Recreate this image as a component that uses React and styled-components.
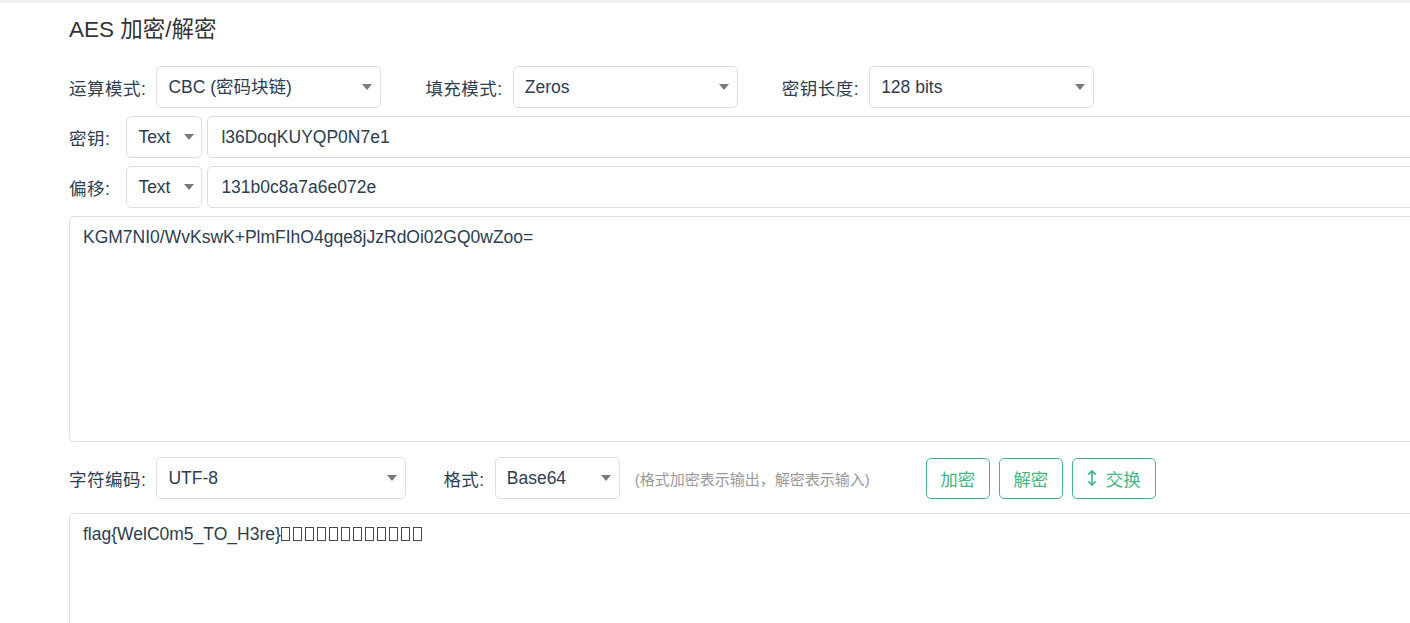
import React, { useState } from "react";
import styled, { createGlobalStyle } from "styled-components";

const Green = "#42b983";
const Ink = "#2c3e50";
const Line = "#dcdfe6";

const GlobalStyle = createGlobalStyle`
  html, body {
    margin: 0;
    padding: 0;
    overflow: hidden;
    background: #fff;
  }
  body {
    font-family: "Liberation Sans", Arial, "Noto Sans CJK SC", sans-serif;
    color: ${Ink};
  }
`;

const TopStrip = styled.div`
  height: 3px;
  background: #eeeeee;
`;

const Page = styled.main`
  width: 1400px;
  padding-left: 69px;
`;

const Title = styled.h2`
  margin: 14px 0 0;
  height: 25px;
  line-height: 25px;
  font-size: 22.5px;
  font-weight: 400;
  color: #333;
`;

const Form = styled.form`
  margin-top: 24px;
`;

const Row = styled.div`
  display: flex;
  align-items: center;
  height: 42px;
  margin-top: ${p => p.$top || 0}px;
`;

const Label = styled.label`
  font-size: 17.5px;
  letter-spacing: 0.5px;
  color: ${Ink};
  white-space: nowrap;
  margin-left: ${p => p.$left || 0}px;
  margin-right: ${p => p.$gap || 10}px;
`;

const SelectWrap = styled.div`
  position: relative;
  flex: 0 0 ${p => p.$width}px;
  height: 42px;
  &::after {
    content: "";
    position: absolute;
    right: ${p => p.$arrow || 9}px;
    top: 18px;
    border-left: 5px solid transparent;
    border-right: 5px solid transparent;
    border-top: 6px solid #7a7a7a;
    pointer-events: none;
  }
`;

const Select = styled.select`
  appearance: none;
  width: 100%;
  height: 100%;
  box-sizing: border-box;
  padding: 0 24px 0 11px;
  font-family: inherit;
  font-size: 17.5px;
  color: ${Ink};
  background: #fff;
  border: 1px solid ${Line};
  border-radius: 5px;
  outline: none;
`;

const TextInput = styled.input`
  flex: 1 1 auto;
  margin-left: 5px;
  height: 42px;
  box-sizing: border-box;
  padding: 0 13px;
  font-family: inherit;
  font-size: 17.5px;
  color: ${Ink};
  border: 1px solid ${Line};
  border-radius: 5px;
  outline: none;
`;

const TextArea = styled.textarea`
  display: block;
  width: 100%;
  height: ${p => p.$height}px;
  margin-top: ${p => p.$top || 0}px;
  box-sizing: border-box;
  padding: 7px 13px;
  font-family: inherit;
  font-size: 17.5px;
  line-height: 1.5;
  color: ${Ink};
  border: 1px solid ${Line};
  border-radius: 5px;
  resize: none;
  outline: none;
`;

const Output = styled.div`
  height: 200px;
  margin-top: 14px;
  box-sizing: border-box;
  padding: 7px 13px;
  font-size: 17.5px;
  line-height: 1.5;
  color: ${Ink};
  border: 1px solid ${Line};
  border-radius: 5px;
`;

const Tofu = styled.span`
  display: inline-block;
  width: 9px;
  height: 14px;
  margin-right: 3px;
  box-sizing: border-box;
  border: 1px solid #4a4a4a;
  vertical-align: -1px;
`;

const Hint = styled.span`
  margin-left: 15px;
  font-size: 15px;
  color: #999;
  white-space: nowrap;
`;

const Actions = styled.div`
  display: flex;
  gap: 9px;
  margin-left: 56px;
`;

const Button = styled.button`
  display: flex;
  align-items: center;
  gap: ${p => (p.$icon ? 9 : 0)}px;
  height: 41px;
  padding: 0 ${p => (p.$icon ? 14 : 13.5)}px;
  font-family: inherit;
  font-size: 17.5px;
  color: ${Green};
  background: #fff;
  border: 1px solid ${Green};
  border-radius: 5px;
  cursor: pointer;
`;

const SwapIcon = () => (
  <svg width="10" height="18" viewBox="0 0 10 18" fill="none" stroke={Green} strokeWidth="1.7" strokeLinecap="round" strokeLinejoin="round">
    <path d="M5 2v14" />
    <path d="M1.8 5.2L5 2l3.2 3.2" />
    <path d="M1.8 12.8L5 16l3.2-3.2" />
  </svg>
);

const Dropdown = ({ width, value, options, arrow }) => (
  <SelectWrap $width={width} $arrow={arrow}>
    <Select defaultValue={value}>
      {options.map(o => (
        <option key={o}>{o}</option>
      ))}
    </Select>
  </SelectWrap>
);

const App = () => {
  const [input, setInput] = useState("KGM7NI0/WvKswK+PlmFIhO4gqe8jJzRdOi02GQ0wZoo=");
  const [key, setKey] = useState("l36DoqKUYQP0N7e1");
  const [iv, setIv] = useState("131b0c8a7a6e072e");

  return (
    <>
      <GlobalStyle />
      <TopStrip />
      <Page>
        <Title>AES 加密/解密</Title>
        <Form onSubmit={e => e.preventDefault()}>
          <Row>
            <Label>运算模式:</Label>
            <Dropdown width={225} value="CBC (密码块链)" options={["ECB (电子密码本)", "CBC (密码块链)", "CFB (密文反馈)", "OFB (输出反馈)", "CTR (计数器)"]} />
            <Label $left={44}>填充模式:</Label>
            <Dropdown width={225} value="Zeros" options={["Pkcs7", "Iso97971", "AnsiX923", "Iso10126", "Zeros", "NoPadding"]} />
            <Label $left={44}>密钥长度:</Label>
            <Dropdown width={225} value="128 bits" options={["128 bits", "192 bits", "256 bits"]} />
          </Row>
          <Row $top={8}>
            <Label $gap={16}>密钥:</Label>
            <Dropdown width={76} value="Text" options={["Text", "Hex", "Base64"]} arrow={8} />
            <TextInput value={key} onChange={e => setKey(e.target.value)} />
          </Row>
          <Row $top={8}>
            <Label $gap={16}>偏移:</Label>
            <Dropdown width={76} value="Text" options={["Text", "Hex", "Base64"]} arrow={8} />
            <TextInput value={iv} onChange={e => setIv(e.target.value)} />
          </Row>
          <TextArea $top={8} $height={226} value={input} onChange={e => setInput(e.target.value)} />
          <Row $top={15}>
            <Label>字符编码:</Label>
            <Dropdown width={250} value="UTF-8" options={["UTF-8", "GBK", "UTF-16"]} />
            <Label $left={37}>格式:</Label>
            <Dropdown width={125} value="Base64" options={["Base64", "Hex"]} />
            <Hint>(格式加密表示输出，解密表示输入)</Hint>
            <Actions>
              <Button type="button">加密</Button>
              <Button type="button">解密</Button>
              <Button type="button" $icon>
                <SwapIcon />
                交换
              </Button>
            </Actions>
          </Row>
          <Output>
            flag{"{"}WelC0m5_TO_H3re{"}"}
            {Array.from({ length: 12 }).map((_, i) => (
              <Tofu key={i} />
            ))}
          </Output>
        </Form>
      </Page>
    </>
  );
};

export default App;
